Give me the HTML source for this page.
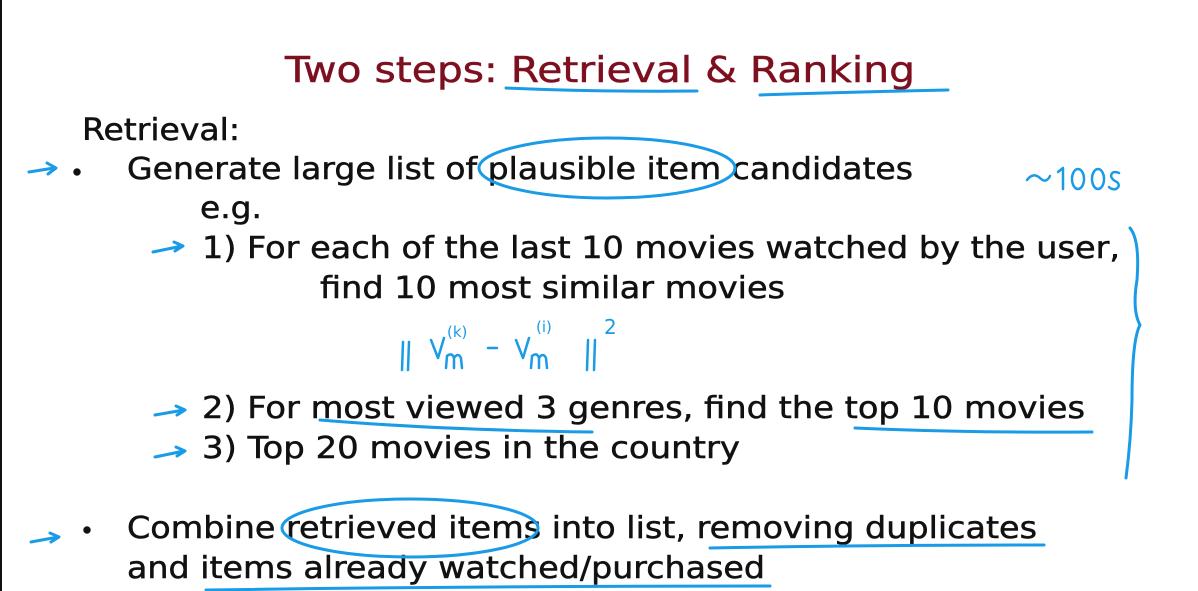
<!DOCTYPE html>
<html><head><meta charset="utf-8"><style>
html,body{margin:0;padding:0;background:#fff;}
svg{display:block}
text{font-family:"DejaVu Sans","Liberation Sans",sans-serif;}
</style></head><body>
<svg width="1198" height="591" viewBox="0 0 1198 591" xmlns="http://www.w3.org/2000/svg">
<rect width="1198" height="591" fill="#fff"/>
<rect x="0" y="0" width="2" height="591" fill="#111"/>
<g fill="#111" stroke="#111" stroke-width="0.5" font-size="30">
<text x="285" y="82" fill="#7d1020" stroke="#7d1020" font-size="36" textLength="630" lengthAdjust="spacingAndGlyphs">Two steps: Retrieval &amp; Ranking</text>
<text x="82" y="140" textLength="158" lengthAdjust="spacingAndGlyphs">Retrieval:</text>
<circle cx="77" cy="172" r="3.5"/>
<text x="127" y="179" textLength="786" lengthAdjust="spacingAndGlyphs">Generate large list of plausible item candidates</text>
<text x="200" y="218" textLength="62" lengthAdjust="spacingAndGlyphs">e.g.</text>
<text x="202" y="258" textLength="918" lengthAdjust="spacingAndGlyphs">1) For each of the last 10 movies watched by the user,</text>
<text x="320" y="298" textLength="465" lengthAdjust="spacingAndGlyphs">find 10 most similar movies</text>
<text x="202" y="418" textLength="883" lengthAdjust="spacingAndGlyphs">2) For most viewed 3 genres, find the top 10 movies</text>
<text x="202" y="458" textLength="538" lengthAdjust="spacingAndGlyphs">3) Top 20 movies in the country</text>
<circle cx="87" cy="530" r="3.5"/>
<text x="127" y="538" textLength="910" lengthAdjust="spacingAndGlyphs">Combine retrieved items into list, removing duplicates</text>
<text x="127" y="578" textLength="638" lengthAdjust="spacingAndGlyphs">and items already watched/purchased</text>
</g>
<g fill="none" stroke="#1a9be6" stroke-width="3" stroke-linecap="round" stroke-linejoin="round">
<path d="M506 88 Q600 92 697 91"/>
<path d="M760 95 Q850 92 948 90"/>
<ellipse cx="607" cy="168" rx="128" ry="30"/>
<path d="M29 172 L54 168 M47 163 L56 168 L48 174"/>
<path d="M153 252 L182 246 M174 242 L183 246 L175 251"/>
<path d="M155 415 L184 410 M176 406 L185 410 L177 415"/>
<path d="M155 457 L184 451 M176 447 L185 451 L177 456"/>
<path d="M31 542 L58 537 M50 533 L59 537 L51 542"/>
<path d="M320 420 Q440 430 592 432"/>
<path d="M855 428 Q970 433 1092 432"/>
<ellipse cx="410" cy="528" rx="128" ry="29"/>
<path d="M710 548 Q870 545 1044 545"/>
<path d="M206 590 Q480 586 770 586"/>
<path d="M1130 228 Q1140 240 1137 280 Q1132 310 1140 325 Q1132 340 1132 400 Q1131 440 1126 478"/>
<g stroke-width="2.5">
<path d="M1027 180 Q1033 172 1040 178 Q1046 184 1050 176"/>
<!-- 100s -->
<path d="M1058 172 L1063 168 L1063 189"/>
<ellipse cx="1078" cy="179" rx="6" ry="10"/>
<ellipse cx="1098" cy="179" rx="6" ry="10"/>
<path d="M1119 173 Q1112 170 1111 176 Q1112 180 1117 182 Q1121 186 1116 189 Q1112 190 1109 187"/>
<!-- formula -->
<path d="M403 342 L402 370 M409 342 L408 370"/>
<path d="M431 340 L438 358 L444 338"/>
<path d="M446 368 L447 356 Q452 352 454 358 L454 368 M454 358 Q458 352 461 358 L462 368"/>
<path d="M488 348 L497 348"/>
<path d="M516 340 L523 358 L529 338"/>
<path d="M531 368 L532 356 Q537 352 539 358 L539 368 M539 358 Q543 352 546 358 L547 368"/>
<path d="M588 340 L587 370 M595 340 L594 370"/>
</g>
</g>
<g fill="#1a9be6" font-family="Liberation Sans">
<text x="447" y="337" font-size="15">(k)</text>
<text x="536" y="332" font-size="15">(i)</text>
<text x="604" y="334" font-size="20">2</text>
</g>
</svg>
</body></html>
